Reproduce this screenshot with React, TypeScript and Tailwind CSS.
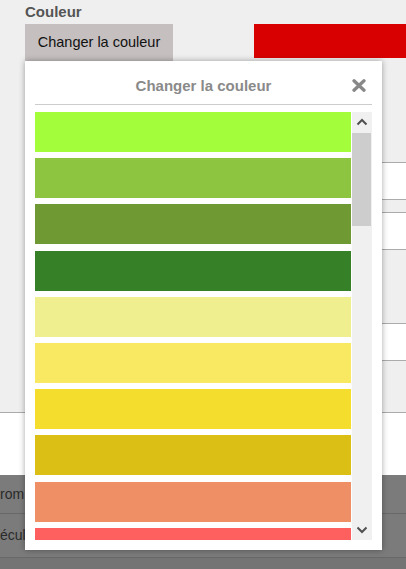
import React from "react";

const swatches = [
  "#a3fd3b",
  "#8dc540",
  "#6f9a33",
  "#368027",
  "#f0ef8f",
  "#f9e862",
  "#f4dd2c",
  "#dbbf15",
  "#ef8f66",
  "#fe6060",
  "#e53935",
  "#c62828",
  "#8e24aa",
  "#5e35b1",
];

function ChevronUp() {
  return (
    <svg width="20" height="21" viewBox="0 0 20 21">
      <polyline points="5.5,12.5 10,8 14.5,12.5" fill="none" stroke="#505050" strokeWidth="2" />
    </svg>
  );
}

function ChevronDown() {
  return (
    <svg width="20" height="21" viewBox="0 0 20 21">
      <polyline points="5.5,8.5 10,13 14.5,8.5" fill="none" stroke="#505050" strokeWidth="2" />
    </svg>
  );
}

function CloseIcon() {
  return (
    <svg width="14" height="13" viewBox="0 0 14 13">
      <path d="M2 1.8 L12 11.2 M12 1.8 L2 11.2" stroke="#888888" strokeWidth="3.3" strokeLinecap="round" />
    </svg>
  );
}

export default function App() {
  return (
    <div className="relative w-[406px] h-[569px] overflow-hidden bg-[#747474] font-['Liberation_Sans',Arial,sans-serif]">
      {/* Underlying dialog panel */}
      <div className="flex flex-col h-[475px] bg-[#efefef]">
        <div className="flex-1 flex flex-col pl-[25px] pt-[3px]">
          <div className="text-[15px] leading-[18px] font-bold text-[#555555]">Couleur</div>
          <div className="flex mt-[3px]">
            <div className="w-[148px] h-[37px] bg-[#c5bfbf] flex items-center justify-center text-[14.5px] text-[#111111]">
              Changer la couleur
            </div>
            <div className="ml-[81px] flex-1 h-[34px] bg-[#d80000]" />
          </div>
          <div className="ml-[140px] mt-[101px] h-[38px] bg-white border-y border-[#ababab]" />
          <div className="ml-[140px] mt-[12px] h-[38px] bg-white border-y border-[#ababab]" />
          <div className="ml-[140px] mt-[73px] h-[38px] bg-white border-y border-[#ababab]" />
        </div>
        <div className="h-[63px] bg-white border-t border-[#ababab]" />
      </div>
      {/* Dimmed table rows */}
      <div className="flex items-center h-[39px] bg-[#7b7b7b] border-b border-[#686868] text-[14px] text-[#2a2a2a]">
        <span>rom</span>
      </div>
      <div className="flex items-center h-[44px] bg-[#7b7b7b] border-b border-[#686868] text-[14px] text-[#2a2a2a]">
        <span>écul</span>
      </div>

      {/* Colour picker popup */}
      <div className="absolute left-[25px] top-[61px] w-[357px] h-[489px] bg-white shadow-[0_0_6px_rgba(0,0,0,0.35)] flex flex-col px-[10px] pt-[16px] pb-[10px]">
        <div className="relative border-b border-[#cccccc] pb-[9px]">
          <div className="text-center text-[15px] leading-[18px] font-bold text-[#8a8a8a]">Changer la couleur</div>
          <div className="absolute left-[317px] top-[2px]">
            <CloseIcon />
          </div>
        </div>
        <div className="mt-[7px] h-[428px] flex">
          <div className="w-[316px] h-full overflow-hidden flex flex-col gap-[6.2px]">
            {swatches.map((c) => (
              <div key={c} className="h-[40px] shrink-0" style={{ backgroundColor: c }} />
            ))}
          </div>
          <div className="ml-px w-[20px] h-full bg-[#f0f0f0] flex flex-col">
            <div className="h-[21px] flex items-center justify-center">
              <ChevronUp />
            </div>
            <div className="w-[19px] h-[93px] bg-[#cdcdcd]" />
            <div className="flex-1" />
            <div className="h-[21px] flex items-center justify-center">
              <ChevronDown />
            </div>
          </div>
        </div>
      </div>
    </div>
  );
}
